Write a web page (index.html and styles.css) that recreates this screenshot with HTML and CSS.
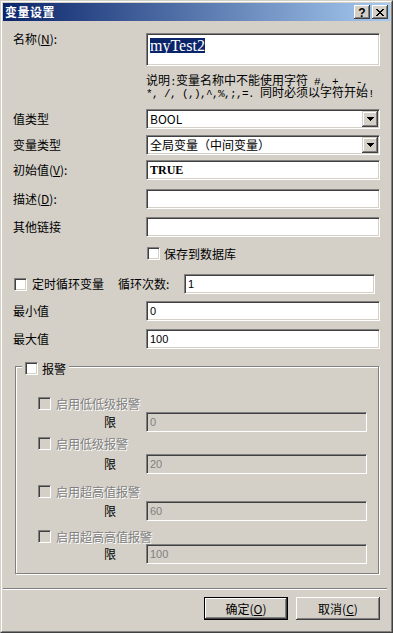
FILE: index.html
```html
<!DOCTYPE html>
<html>
<head>
    <title>变量设置</title>
    <link rel="stylesheet" href="styles.css">
</head>
<body>
<div class="window">
  <div class="frame">
    <div class="titlebar">
      <span class="title">变量设置</span>
      <div class="caps">
        <span class="cap cap-help">?</span>
        <span class="cap">
          <svg width="8" height="7" viewBox="0 0 8 7" shape-rendering="crispEdges"><path d="M0 0h2v1H0z M6 0h2v1H6z M1 1h2v1H1z M5 1h2v1H5z M2 2h4v1H2z M3 3h2v1H3z M2 4h4v1H2z M1 5h2v1H1z M5 5h2v1H5z M0 6h2v1H0z M6 6h2v1H6z"/></svg>
        </span>
      </div>
    </div>

    <div class="client">
      <div class="row row-name">
        <span class="label">名称(<u>N</u>):</span>
        <div class="edit edit-name"><span class="sel">myTest2</span></div>
      </div>
      <div class="note">
        <div class="note-line">说明<span class="asc">:</span>变量名称中不能使用字符<span class="asc"> #, + , -,</span></div>
        <div class="note-line"><span class="asc">*, /, (,),^,%,;,=. </span>同时必须以字符开始<span class="asc">!</span></div>
      </div>

      <div class="row row-combo1">
        <span class="label">值类型</span>
        <div class="edit combo"><span class="val">BOOL</span><span class="drop"><svg width="7" height="4" viewBox="0 0 7 4" shape-rendering="crispEdges"><path d="M0 0h7v1H0z M1 1h5v1H1z M2 2h3v1H2z M3 3h1v1H3z"/></svg></span></div>
      </div>
      <div class="row row-combo2">
        <span class="label">变量类型</span>
        <div class="edit combo"><span class="val">全局变量（中间变量）</span><span class="drop"><svg width="7" height="4" viewBox="0 0 7 4" shape-rendering="crispEdges"><path d="M0 0h7v1H0z M1 1h5v1H1z M2 2h3v1H2z M3 3h1v1H3z"/></svg></span></div>
      </div>
      <div class="row row-init">
        <span class="label">初始值(<u>V</u>):</span>
        <div class="edit"><span class="val val-bold">TRUE</span></div>
      </div>
      <div class="row row-desc">
        <span class="label">描述(<u>D</u>):</span>
        <div class="edit"></div>
      </div>
      <div class="row row-link">
        <span class="label">其他链接</span>
        <div class="edit"></div>
      </div>

      <div class="row row-save">
        <span class="check"></span>
        <span class="check-text">保存到数据库</span>
      </div>

      <div class="row row-cycle">
        <span class="cycle-check"><span class="check"></span><span class="check-text">定时循环变量</span></span>
        <span class="cycle-label">循环次数:</span>
        <div class="edit edit-cycle"><span class="val">1</span></div>
      </div>
      <div class="row row-min">
        <span class="label">最小值</span>
        <div class="edit"><span class="val">0</span></div>
      </div>
      <div class="row row-max">
        <span class="label">最大值</span>
        <div class="edit"><span class="val">100</span></div>
      </div>

      <div class="group">
        <div class="legend"><span class="check"></span><span>报警</span></div>

        <div class="alarm a1"><span class="check check-dis"></span><span class="dis">启用低低级报警</span></div>
        <div class="limit l1"><span class="limit-label">限</span><div class="edit edit-dis"><span class="val">0</span></div></div>

        <div class="alarm a2"><span class="check check-dis"></span><span class="dis">启用低级报警</span></div>
        <div class="limit l2"><span class="limit-label">限</span><div class="edit edit-dis"><span class="val">20</span></div></div>

        <div class="alarm a3"><span class="check check-dis"></span><span class="dis">启用超高值报警</span></div>
        <div class="limit l3"><span class="limit-label">限</span><div class="edit edit-dis"><span class="val">60</span></div></div>

        <div class="alarm a4"><span class="check check-dis"></span><span class="dis">启用超高高值报警</span></div>
        <div class="limit l4"><span class="limit-label">限</span><div class="edit edit-dis"><span class="val">100</span></div></div>
      </div>

      <div class="sep"></div>

      <div class="buttons">
        <button class="btn btn-default">确定(<u>O</u>)</button>
        <button class="btn">取消(<u>C</u>)</button>
      </div>
    </div>
  </div>
</div>
</body>
</html>
```

FILE: styles.css
```css
* { box-sizing: border-box; }
body {
    margin: 0;
    background: #D4D0C8;
    font-family: "Noto Sans CJK SC", "Liberation Sans", sans-serif;
    font-size: 12px;
    line-height: 12px;
    color: #000;
}
u { text-decoration: underline; text-underline-offset: 1px; }

/* window frame */
.window {
    width: 393px;
    height: 633px;
    border: 1px solid;
    border-color: #D4D0C8 #404040 #404040 #D4D0C8;
    background: #D4D0C8;
}
.frame {
    height: 100%;
    border: 1px solid;
    border-color: #fff #808080 #808080 #fff;
    padding: 1px;
    display: flex;
    flex-direction: column;
}
.titlebar {
    height: 18px;
    flex: none;
    display: flex;
    align-items: center;
    justify-content: space-between;
    padding: 0 2px;
    background: linear-gradient(to right, #0A246A, #A6CAF0);
}
.title {
    color: #fff;
    font-weight: bold;
    letter-spacing: 0.5px;
}
.caps { display: flex; gap: 2px; }
.cap {
    width: 16px;
    height: 14px;
    display: flex;
    align-items: center;
    justify-content: center;
    background: #D4D0C8;
    box-shadow: inset -1px -1px #404040, inset 1px 1px #fff, inset -2px -2px #808080;
}
.cap-help {
    font-family: "Liberation Sans", sans-serif;
    font-weight: bold;
    font-size: 12px;
    padding-top: 1px;
}

/* client area */
.client {
    flex: 1;
    padding: 12px 10px 0 10px;
}
.row { display: flex; align-items: center; }
.label { width: 133px; flex: none; }

.edit {
    position: relative;
    flex: 1;
    height: 20px;
    display: flex;
    align-items: center;
    padding-left: 3px;
    background: #fff;
    border: 1px solid;
    border-color: #808080 #fff #fff #808080;
    box-shadow: inset 1px 1px #404040, inset -1px -1px #D4D0C8;
}
.val { font-family: "Liberation Sans", "Noto Sans CJK SC", sans-serif; font-size: 11px; }
.combo .val { font-family: "Noto Sans CJK SC", "Liberation Sans", sans-serif; font-size: 12px; }
.val-bold { font-family: "Liberation Serif", serif; font-weight: bold; font-size: 12px; }

.row-name { align-items: flex-start; }
.edit-name {
    height: 33px;
    align-items: flex-start;
    padding: 4px 0 0 3px;
}
.sel {
    font-family: "Liberation Serif", serif;
    font-size: 16px;
    line-height: 15px;
    background: #0A246A;
    color: #fff;
}
.note {
    margin: 8px 0 0 133px;
    height: 24px;
}
.note-line {
    white-space: pre;
    line-height: 12px;
    height: 12px;
}
.asc {
    font-family: "Liberation Mono", monospace;
    font-size: 11px;
    letter-spacing: -0.6px;
}

.drop {
    position: absolute;
    right: 1px;
    top: 1px;
    width: 16px;
    height: 16px;
    display: flex;
    align-items: center;
    justify-content: center;
    background: #D4D0C8;
    box-shadow: inset -1px -1px #404040, inset 1px 1px #D4D0C8, inset -2px -2px #808080, inset 2px 2px #fff;
}

.row-combo1 { margin-top: 11px; }
.row-combo2 { margin-top: 6px; }
.row-init { margin-top: 5px; }
.row-desc { margin-top: 9px; }
.row-link { margin-top: 8px; }
.row-save { margin-top: 10px; height: 13px; padding-left: 134px; }
.row-cycle { margin-top: 14px; }
.row-min { margin-top: 7px; }
.row-max { margin-top: 8px; }

.check {
    width: 13px;
    height: 13px;
    flex: none;
    background: #fff;
    border: 1px solid;
    border-color: #808080 #fff #fff #808080;
    box-shadow: inset 1px 1px #404040, inset -1px -1px #D4D0C8;
}
.check-text { margin-left: 4px; }
.check-dis { background: #D4D0C8; }

.cycle-check {
    width: 105px;
    flex: none;
    display: flex;
    align-items: center;
    padding-left: 1px;
}
.cycle-check .check-text { margin-left: 5px; }
.cycle-label { width: 66px; flex: none; }
.edit-cycle { flex: none; width: 191px; }

/* alarm group */
.group {
    position: relative;
    margin: 17px 1px 0 2px;
    height: 208px;
    border: 1px solid #808080;
    box-shadow: inset 1px 1px #fff, 1px 1px #fff;
    padding: 30px 0 0 22px;
}
.legend {
    position: absolute;
    top: -5px;
    left: 6px;
    padding: 0 3px;
    display: flex;
    align-items: center;
    gap: 4px;
    background: #D4D0C8;
}
.alarm { display: flex; align-items: center; gap: 5px; height: 13px; }
.dis { color: #808080; text-shadow: 1px 1px 0 #fff; }
.limit { display: flex; align-items: center; height: 20px; padding-left: 66px; }
.limit-label { width: 42px; flex: none; }
.limit .edit { flex: none; width: 221px; }
.edit-dis { background: #D4D0C8; }
.edit-dis .val { color: #808080; }

.l1 { margin-top: 2px; }
.a2 { margin-top: 5px; }
.l2 { margin-top: 4px; }
.a3 { margin-top: 11px; }
.l3 { margin-top: 3px; }
.a4 { margin-top: 9px; }
.l4 { margin-top: 1px; }

.sep {
    margin: 14px -7px 0 -10px;
    height: 2px;
    border-top: 1px solid #808080;
    border-bottom: 1px solid #fff;
}

.buttons {
    display: flex;
    justify-content: flex-end;
    gap: 8px;
    margin-top: 7px;
}
.btn {
    width: 84px;
    height: 23px;
    padding: 0;
    border: none;
    font-family: "Noto Sans CJK SC", "Liberation Sans", sans-serif;
    font-size: 12px;
    line-height: 12px;
    color: #000;
    background: #D4D0C8;
    box-shadow: inset -1px -1px #404040, inset 1px 1px #fff, inset -2px -2px #808080, inset 2px 2px #D4D0C8;
}
.btn-default {
    border: 1px solid #000;
}
```
